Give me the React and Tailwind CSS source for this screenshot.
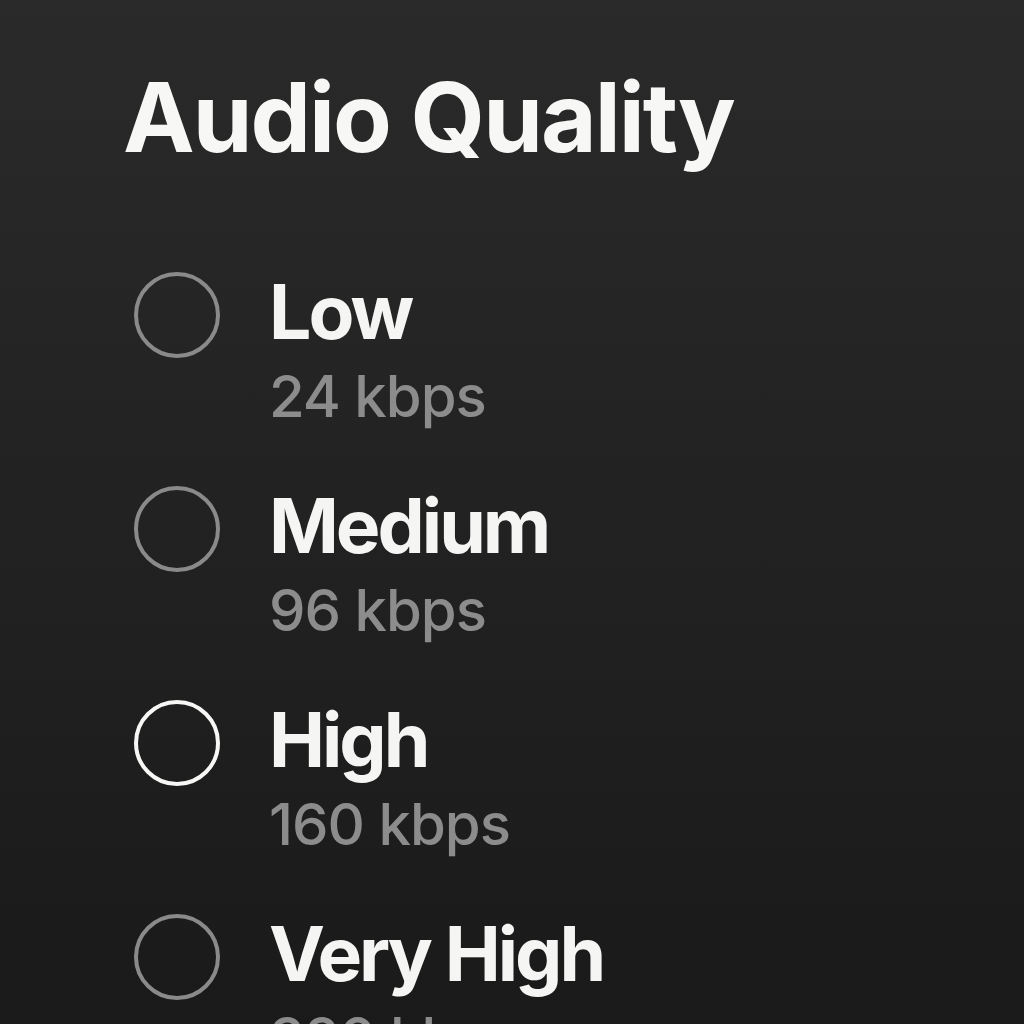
export default function App() {
  const rows = [
    { label: "Low", sub: "24 kbps", selected: false },
    { label: "Medium", sub: "96 kbps", selected: false },
    { label: "High", sub: "160 kbps", selected: true },
    { label: "Very High", sub: "320 kbps", selected: false },
  ];
  return (
    <div
      className="w-[1024px] h-[1024px] overflow-hidden bg-gradient-to-b from-[#2a2a2a] to-[#1a1a1a]"
      style={{ fontFamily: "Inter, 'Noto Sans', sans-serif" }}
    >
      <h1 className="pt-[67px] pl-[123px] text-[96px] leading-[100px] font-bold text-[#f7f7f5] tracking-[-2px]">
        Audio Quality
      </h1>
      <div className="mt-[105px] flex flex-col gap-[60px] pl-[134px]">
        {rows.map((r) => (
          <div key={r.label} className="flex items-start gap-[49px]">
            <div
              className={
                r.selected
                  ? "w-[86px] h-[86px] shrink-0 rounded-full border-[4px] border-[#f7f7f5]"
                  : "w-[86px] h-[86px] shrink-0 rounded-full border-[4px] border-[#8a8a8a]"
              }
            />
            <div className="flex flex-col gap-[14px]">
              <div className="text-[75px] leading-[80px] font-bold text-[#f5f5f3] tracking-[-3px]">
                {r.label}
              </div>
              <div className="text-[58px] leading-[60px] font-medium text-[#8c8c8c] tracking-[-1px]">
                {r.sub}
              </div>
            </div>
          </div>
        ))}
      </div>
    </div>
  );
}
